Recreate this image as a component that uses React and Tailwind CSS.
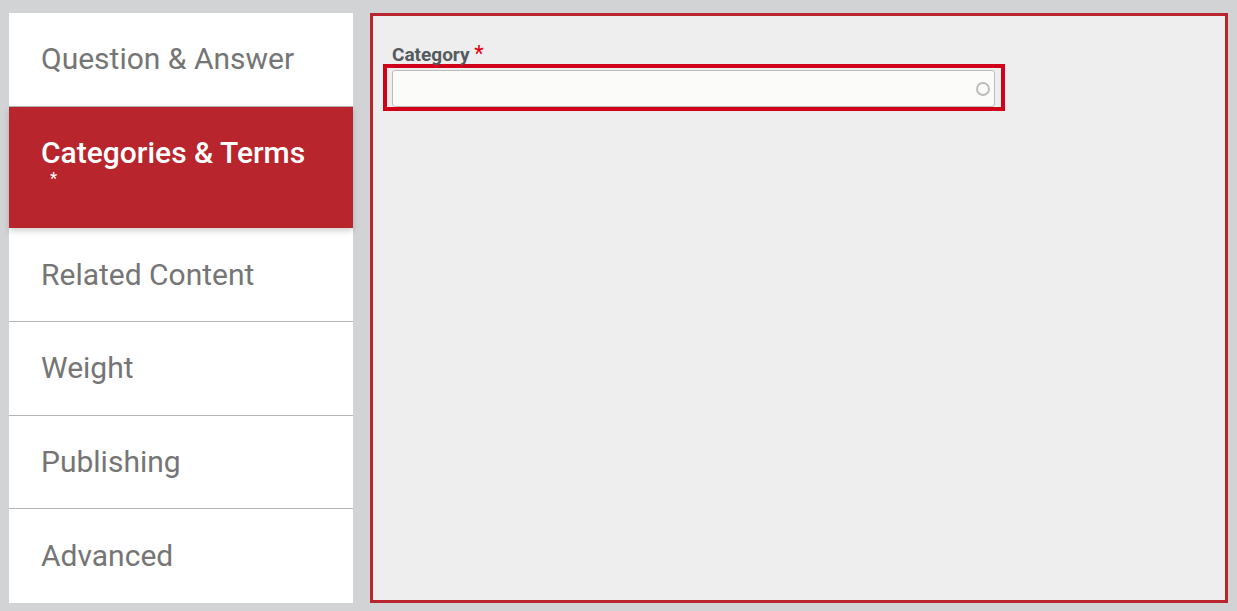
import { useState } from 'react';

const tabs = [
  { id: 'qa', label: 'Question & Answer' },
  { id: 'categories', label: 'Categories & Terms', required: true },
  { id: 'related', label: 'Related Content' },
  { id: 'weight', label: 'Weight' },
  { id: 'publishing', label: 'Publishing' },
  { id: 'advanced', label: 'Advanced' },
];

function SidebarTab({ tab, active, last, onSelect }) {
  if (active) {
    return (
      <button
        onClick={() => onSelect(tab.id)}
        className="relative z-10 flex h-[122px] w-full flex-col items-start justify-start bg-[#b8252c] px-8 pt-[29px] text-left text-[30px] font-medium leading-[34px] text-white shadow-[0_3px_6px_rgba(0,0,0,0.18)]"
      >
        <span>{tab.label}</span>
        {tab.required && <span className="pl-[9px] text-[16px] leading-[18px]">*</span>}
      </button>
    );
  }
  return (
    <button
      onClick={() => onSelect(tab.id)}
      className={
        'flex h-[94px] w-full items-center bg-white px-8 text-left text-[30px] leading-[34px] text-[#757575] ' +
        (last ? '' : 'border-b border-[#b5b5b5]')
      }
    >
      {tab.label}
    </button>
  );
}

export default function App() {
  const [active, setActive] = useState('categories');

  return (
    <div
      className="flex h-[611px] w-[1237px] gap-[17px] bg-[#d2d3d5] pb-[8px] pl-[9px] pr-[9px] pt-[13px]"
      style={{ fontFamily: 'Roboto, "Noto Sans", sans-serif' }}
    >
      <nav className="flex w-[344px] shrink-0 flex-col bg-white">
        {tabs.map((tab, i) => (
          <SidebarTab
            key={tab.id}
            tab={tab}
            active={tab.id === active}
            last={i === tabs.length - 1}
            onSelect={setActive}
          />
        ))}
      </nav>

      <main className="flex-1 border-[3px] border-[#b8252c] bg-[#eeeeee] pl-[10px] pt-[28px]">
        <label className="block pl-[9px] text-[19px] font-bold leading-[20px] text-[#555a5f]">
          Category <span className="text-[22px] font-normal text-[#e3000f]">*</span>
        </label>
        <div className="mt-[-1px] flex w-[622px] border-4 border-[#d0021b] pl-[5px] pr-[6px] pt-[2px]">
          <div className="flex h-[37px] flex-1 items-center justify-end rounded-[3px] border border-[#bcbcbc] bg-[#fbfbfa] pr-[3px]">
            <svg width="16" height="16" viewBox="0 0 16 16" fill="none">
              <circle cx="8" cy="8" r="6" stroke="#bdbdbd" strokeWidth="2" />
            </svg>
          </div>
        </div>
      </main>
    </div>
  );
}
